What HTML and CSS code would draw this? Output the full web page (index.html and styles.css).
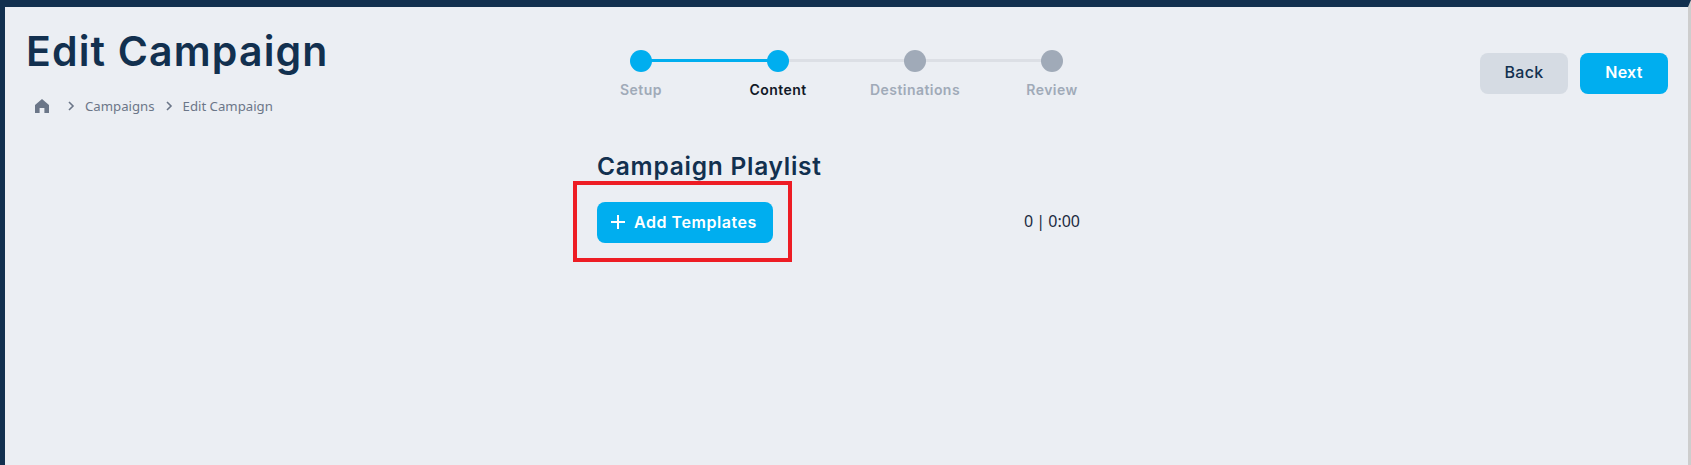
FILE: index.html
```html
<!DOCTYPE html>
<html lang="en">
<head>
  <meta charset="UTF-8">
  <title>Edit Campaign</title>
  <link rel="stylesheet" href="styles.css">
</head>
<body>
  <div class="page">
    <div class="header">
      <div class="title-block">
        <h1 class="title">Edit Campaign</h1>
        <div class="crumbs">
          <svg class="home" viewBox="0 0 16 16"><path d="M8 1 1 7v8h4.6v-5h4.8v5H15V7z"/></svg>
          <svg class="chev first" viewBox="0 0 8 10"><path d="M2 1l4 4-4 4"/></svg>
          <span>Campaigns</span>
          <svg class="chev" viewBox="0 0 8 10"><path d="M2 1l4 4-4 4"/></svg>
          <span>Edit Campaign</span>
        </div>
      </div>

      <div class="stepper">
        <div class="step done">
          <div class="dot"></div>
          <div class="label">Setup</div>
        </div>
        <div class="step active">
          <div class="dot"></div>
          <div class="label">Content</div>
        </div>
        <div class="step">
          <div class="dot"></div>
          <div class="label">Destinations</div>
        </div>
        <div class="step last">
          <div class="dot"></div>
          <div class="label">Review</div>
        </div>
      </div>

      <div class="actions">
        <button class="button back">Back</button>
        <button class="button next">Next</button>
      </div>
    </div>

    <div class="playlist">
      <h2 class="playlist-title">Campaign Playlist</h2>
      <div class="playlist-row">
        <button class="button add">
          <svg class="plus" viewBox="0 0 16 16"><path d="M8 1v14M1 8h14"/></svg>
          Add Templates
        </button>
        <span class="count">0 | 0:00</span>
        <div class="highlight"></div>
      </div>
    </div>
  </div>
</body>
</html>
```

FILE: styles.css
```css
html, body {
  margin: 0;
  height: 100%;
  overflow: hidden;
  background-color: #ebeef3;
}

.page {
  height: 100%;
  box-sizing: border-box;
  border-top: 7px solid #12304f;
  border-left: 5px solid #12304f;
  border-right: 3px solid #cdcdcd;
  font-family: "Inter", "Liberation Sans", sans-serif;
  color: #12304f;
}

.header {
  display: grid;
  grid-template-columns: 1fr auto 1fr;
  align-items: start;
}

.title-block {
  padding: 20px 0 0 21px;
}

.title {
  margin: 0;
  font-size: 41px;
  line-height: 48px;
  font-weight: 600;
  letter-spacing: 1.15px;
}

.crumbs {
  display: flex;
  align-items: center;
  margin-top: 21px;
  padding-left: 8px;
  font-family: "Noto Sans", sans-serif;
  font-size: 13.2px;
  line-height: 20px;
  color: #6b7688;
}

.home {
  width: 16px;
  height: 16px;
  fill: #6b7688;
}

.chev {
  width: 8px;
  height: 10px;
  margin: 0 10px;
  fill: none;
  stroke: #6b7688;
  stroke-width: 1.6;
}

.chev.first {
  margin-left: 17px;
}

.stepper {
  display: flex;
  padding-top: 43px;
}

.step {
  position: relative;
  width: 137px;
  display: flex;
  flex-direction: column;
  align-items: center;
}

.step::after {
  content: "";
  position: absolute;
  left: 50%;
  top: 9px;
  width: 100%;
  height: 3px;
  background-color: #dcdfe5;
}

.step.done::after {
  background-color: #00aeef;
}

.step.last::after {
  display: none;
}

.dot {
  position: relative;
  z-index: 1;
  width: 22px;
  height: 22px;
  border-radius: 50%;
  background-color: #a0aab8;
}

.step.done .dot,
.step.active .dot {
  background-color: #00aeef;
}

.label {
  margin-top: 8px;
  font-size: 14px;
  line-height: 20px;
  font-weight: 600;
  letter-spacing: 0.45px;
  color: #a0aab8;
}

.step.active .label {
  color: #111827;
}

.actions {
  display: flex;
  justify-content: flex-end;
  gap: 12px;
  padding: 46px 20px 0 0;
}

.button {
  border: none;
  border-radius: 8px;
  font-family: "Inter", "Liberation Sans", sans-serif;
  font-size: 16px;
  font-weight: 500;
  letter-spacing: 0.3px;
  height: 41px;
  width: 88px;
  padding: 0 0 4px;
}

.back {
  background-color: #d5dbe3;
  color: #12304f;
}

.next,
.add {
  background-color: #00aeef;
  color: #fff;
  font-weight: 600;
}

.playlist {
  width: 499px;
  margin: 0 auto;
  padding-top: 35px;
}

.playlist-title {
  margin: 0;
  font-size: 24.5px;
  line-height: 30px;
  font-weight: 600;
  letter-spacing: 0.75px;
}

.playlist-row {
  position: relative;
  display: flex;
  align-items: center;
  justify-content: space-between;
  margin-top: 21px;
  padding-right: 16px;
}

.add {
  display: flex;
  align-items: center;
  gap: 8px;
  width: 176px;
  padding: 0 0 2px 13px;
  letter-spacing: 0.55px;
}

.plus {
  width: 16px;
  height: 16px;
  fill: none;
  stroke: #fff;
  stroke-width: 2;
}

.count {
  font-family: "Noto Sans", sans-serif;
  font-size: 16px;
  word-spacing: -1px;
  color: #1b2a41;
  padding-bottom: 4px;
}

.highlight {
  position: absolute;
  left: -24px;
  top: -21px;
  width: 219px;
  height: 81px;
  box-sizing: border-box;
  border: 4px solid #ed1c24;
}
```
